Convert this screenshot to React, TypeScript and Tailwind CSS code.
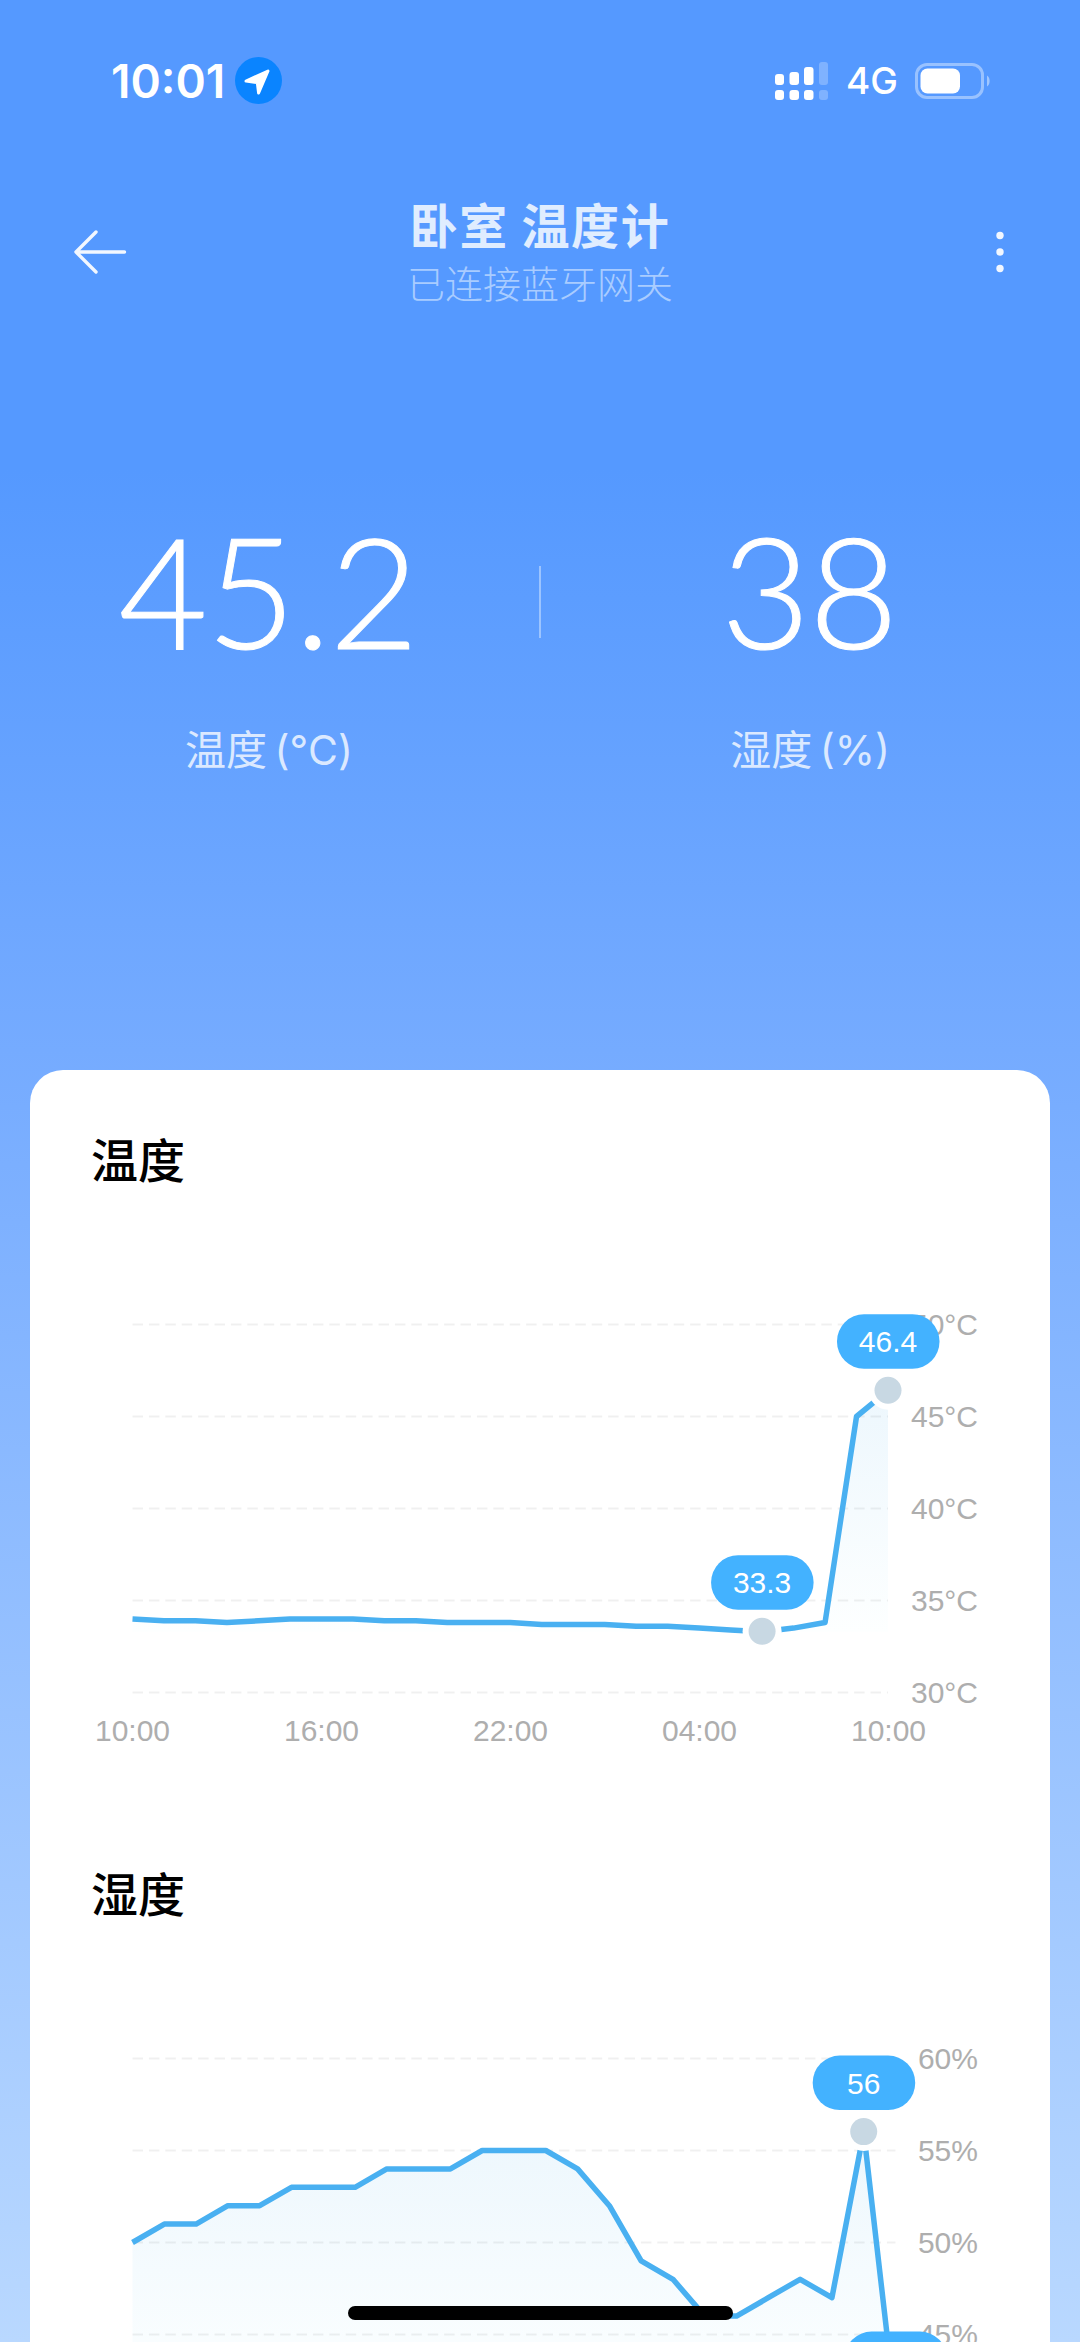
import { useId } from 'react'

type Highlight = { index: number; label: string }

type ChartProps = {
  points: number[]
  max: number
  /** Width of the plot area, the first point always sits on the left edge */
  plotWidth: number
  unit: string
  highlights: Highlight[]
  hours: string[]
}

const PLOT_LEFT = 102.5
const PLOT_TOP = 134.5
const ROW_HEIGHT = 92
const ROW_STEP = 5
const ROWS = [0, 1, 2, 3, 4]

function TrendChart({ points, max, plotWidth, unit, highlights, hours }: ChartProps) {
  const gradientId = useId()
  const x = (index: number) => PLOT_LEFT + (index * plotWidth) / (points.length - 1)
  const y = (value: number) => PLOT_TOP + ((max - value) * ROW_HEIGHT) / ROW_STEP
  const top = y(Math.max(...points))
  const bottom = y(Math.min(...points))
  const line = points.map((value, i) => `${x(i)},${y(value)}`).join(' ')

  return (
    <svg className="block" width="1020" height="614" viewBox="0 0 1020 614" fontFamily="'Liberation Sans', Arial, sans-serif" fontSize="30">
      <defs>
        <linearGradient id={gradientId} gradientUnits="userSpaceOnUse" x1="0" x2="0" y1={top} y2={bottom}>
          <stop offset="0" stopColor="#edf7fd" />
          <stop offset="1" stopColor="#fdffff" />
        </linearGradient>
      </defs>

      <polygon points={`${x(0)},${bottom} ${line} ${x(points.length - 1)},${bottom}`} fill={`url(#${gradientId})`} />

      {ROWS.map((row) => (
        <g key={row}>
          <line
            x1={PLOT_LEFT}
            x2={PLOT_LEFT + plotWidth}
            y1={PLOT_TOP + row * ROW_HEIGHT}
            y2={PLOT_TOP + row * ROW_HEIGHT}
            stroke="#000000"
            strokeOpacity="0.06"
            strokeWidth="2"
            strokeDasharray="10.5 5.9"
          />
          <text x="948" y={PLOT_TOP + row * ROW_HEIGHT + 10} textAnchor="end" fill="#aeaeae">
            {max - row * ROW_STEP}
            {unit}
          </text>
        </g>
      ))}

      {hours.map((hour, i) => (
        <text key={i} x={102.5 + i * 189} y="551" textAnchor="middle" fill="#aeaeae">
          {hour}
        </text>
      ))}

      <polyline points={line} fill="none" stroke="#49b0f1" strokeWidth="5.5" strokeLinejoin="round" />

      {highlights.map(({ index, label }) => {
        const cx = x(index)
        const cy = y(points[index]) - 0.5
        return (
          <g key={index}>
            <circle cx={cx} cy={cy} r="19.5" fill="#ffffff" />
            <circle cx={cx} cy={cy} r="13.5" fill="#c8d8e3" />
            <rect x={cx - 51} y={cy - 76} width="102.5" height="54.5" rx="27" fill="#43b2ff" />
            <text x={cx} y={cy - 38} textAnchor="middle" fill="#ffffff">
              {label}
            </text>
          </g>
        )
      })}
    </svg>
  )
}

const temperature = [
  34, 33.9, 33.9, 33.8, 33.9, 34, 34, 34, 33.9, 33.9, 33.8, 33.8, 33.8, 33.7, 33.7, 33.7, 33.6, 33.6, 33.5, 33.4, 33.3,
  33.5, 33.8, 45, 46.4,
]

const humidity = [50, 51, 51, 52, 52, 53, 53, 53, 54, 54, 54, 55, 55, 55, 54, 52, 49, 48, 46, 46, 47, 48, 47, 56, 41]

const hours = ['10:00', '16:00', '22:00', '04:00', '10:00']

function StatusBar() {
  return (
    <div className="flex h-[161px] items-center justify-between pr-[89px] pl-[111px] text-white">
      <div className="flex items-center gap-[10px]">
        <span className="font-['Inter',sans-serif] text-[46px] leading-none font-semibold">10:01</span>
        <svg width="47" height="47" viewBox="0 0 47 47">
          <circle cx="23.5" cy="23.5" r="23.5" fill="#0a84ff" />
          <path d="M33 14 L23.6 36 L22.3 25.6 L11 24 Z" fill="#fff" stroke="#fff" strokeWidth="3" strokeLinejoin="round" />
        </svg>
      </div>

      <div className="flex items-center">
        <svg width="54" height="40" viewBox="0 0 54 40" fill="#fff">
          <rect x="0" y="13" width="9" height="11" rx="3" />
          <rect x="14.5" y="11" width="9.5" height="13" rx="3" />
          <rect x="29" y="6" width="9.5" height="18" rx="3" />
          <rect x="44" y="1" width="9" height="23" rx="3" opacity=".25" />
          <rect x="0" y="29" width="9" height="10" rx="3" />
          <rect x="14.5" y="29" width="9.5" height="10" rx="3" />
          <rect x="29" y="29" width="9.5" height="10" rx="3" />
          <rect x="44" y="29" width="9" height="10" rx="3" opacity=".25" />
        </svg>
        <span className="ml-[17px] font-['Inter',sans-serif] text-[37px] leading-none font-medium">4G</span>
        <svg className="ml-[17px]" width="76" height="36" viewBox="0 0 76 36">
          <rect x="1.5" y="1.5" width="66" height="33" rx="10.5" fill="none" stroke="#fff" strokeOpacity=".4" strokeWidth="3" />
          <rect x="5.5" y="5.5" width="39.5" height="25" rx="7" fill="#fff" />
          <path d="M72 12.5 C75.5 14.5 75.5 21.5 72 23.5 Z" fill="#fff" fillOpacity=".45" />
        </svg>
      </div>
    </div>
  )
}

function Header() {
  return (
    <header className="flex h-[180px] items-center justify-between px-[74px] pt-[2px] font-['Noto_Sans_CJK_SC',sans-serif]">
      <svg width="53" height="44" viewBox="0 0 53 44" fill="none" stroke="#f2f7ff" strokeWidth="3.4" strokeLinecap="round" strokeLinejoin="round">
        <path d="M50.5 22 H2 M22 2 L2 22 L22 42" />
      </svg>
      <div className="flex flex-col items-center">
        <h1 className="text-[48px] leading-[60px] font-bold tracking-[1.6px] text-[#e0edff]">卧室 温度计</h1>
        <p className="text-[38px] leading-[58px] font-light text-[#a9ccff]">已连接蓝牙网关</p>
      </div>
      <svg width="53" height="44" viewBox="0 0 53 44" fill="#f2f7ff">
        <circle cx="47" cy="5.5" r="3.7" />
        <circle cx="47" cy="22" r="3.7" />
        <circle cx="47" cy="38.5" r="3.7" />
      </svg>
    </header>
  )
}

function Reading({ value, label }: { value: string; label: string }) {
  return (
    <div className="flex flex-1 flex-col items-center">
      <span className="pr-[3px] font-['Lato',sans-serif] text-[154px] leading-[145px] font-light tracking-[-1.2px] text-white [-webkit-text-stroke:1px_white]">
        {value}
      </span>
      <span className="mt-[63px] pr-[1px] font-['Inter','Noto_Sans_CJK_SC',sans-serif] text-[41px] leading-[50px] [word-spacing:-4px] text-[#dbe9ff]">
        {label}
      </span>
    </div>
  )
}

export default function App() {
  return (
    <div className="flex h-[2342px] w-[1080px] flex-col overflow-hidden bg-[linear-gradient(#5599ff_0px,#5599ff_470px,#75abff_1050px,#b9d8ff_2342px)]">
      <StatusBar />
      <Header />

      <div className="flex h-[729px] items-start pt-[176px]">
        <Reading value="45.2" label="温度 (°C)" />
        <div className="mt-[49px] h-[72px] w-[2px] bg-[#9cc4ff]" />
        <Reading value="38" label="湿度 (%)" />
      </div>

      <main className="mx-[30px] flex-1 overflow-hidden rounded-t-[33px] bg-white font-['Noto_Sans_CJK_SC',sans-serif]">
        <section className="pt-[58px]">
          <h2 className="pb-[2px] pl-[61px] text-[47px] leading-[60px] font-medium text-black">温度</h2>
          <TrendChart
            points={temperature}
            max={50}
            plotWidth={755.5}
            unit="°C"
            hours={hours}
            highlights={[
              { index: 20, label: '33.3' },
              { index: 24, label: '46.4' },
            ]}
          />
        </section>
        <section className="pt-[58px]">
          <h2 className="pb-[2px] pl-[61px] text-[47px] leading-[60px] font-medium text-black">湿度</h2>
          <TrendChart
            points={humidity}
            max={60}
            plotWidth={763}
            unit="%"
            hours={hours}
            highlights={[
              { index: 23, label: '56' },
              { index: 24, label: '41' },
            ]}
          />
        </section>
      </main>

      {/* Home indicator */}
      <div className="fixed top-[2306px] left-[348px] h-[14px] w-[385px] rounded-full bg-black" />
    </div>
  )
}
